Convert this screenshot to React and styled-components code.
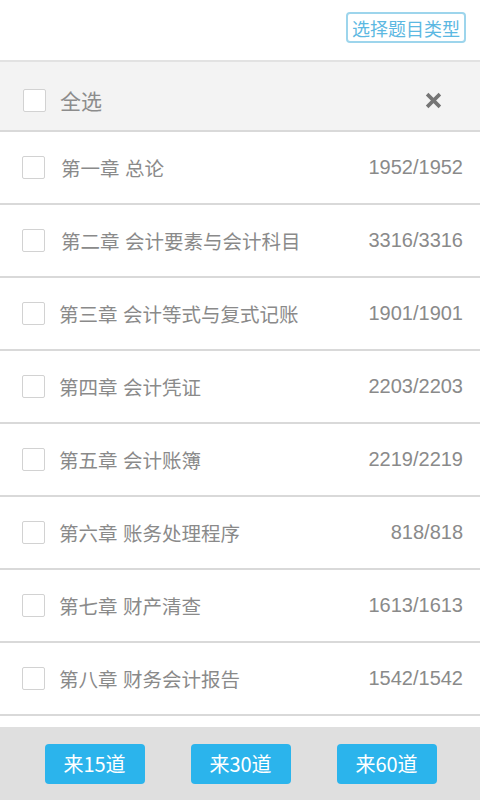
import React from "react";
import styled, { createGlobalStyle } from "styled-components";

const Global = createGlobalStyle`
  html, body { margin: 0; padding: 0; background: #fff; }
  body { font-family: "Liberation Sans", "Noto Sans CJK SC", sans-serif; }
  * { box-sizing: border-box; }
`;

const Page = styled.div`
  width: 480px;
  height: 800px;
  display: flex;
  flex-direction: column;
  overflow: hidden;
`;

const Header = styled.div`
  height: 62px;
  flex: none;
  display: flex;
  justify-content: flex-end;
  align-items: flex-start;
  padding: 12px 14px 0 0;
  border-bottom: 2px solid #e2e2e2;
  background: #fff;
`;

const TypeButton = styled.div`
  width: 120px;
  height: 31px;
  border: 2px solid #9dd5ec;
  border-radius: 4px;
  color: #5cb8e2;
  font-family: "Noto Sans CJK SC", sans-serif;
  font-size: 18px;
  display: flex;
  align-items: center;
  justify-content: center;
`;

const SelectAllBar = styled.div`
  height: 70px;
  flex: none;
  background: #f3f3f3;
  border-bottom: 2px solid #d9d9d9;
  display: flex;
  align-items: center;
  padding: 8px 0 0 23px;
`;

const Box = styled.span`
  width: 23px;
  height: 23px;
  flex: none;
  border: 1px solid #d2d2d2;
  border-radius: 2px;
  background: #fff;
`;

const SelectAllText = styled.span`
  margin-left: 14px;
  font-size: 21px;
  color: #8c8c8c;
  flex: 1;
`;

const CloseWrap = styled.span`
  width: 94px;
  display: flex;
  justify-content: center;
`;

const List = styled.div`
  flex: 1;
  overflow: hidden;
  background: #fff;
`;

const Row = styled.div`
  height: 73px;
  display: flex;
  align-items: center;
  padding: 0 17px 0 22px;
  border-bottom: 2px solid #d9d9d9;
`;

const Label = styled.span`
  flex: 1;
  margin-left: ${(p) => p.$indent}px;
  font-size: 19.5px;
  color: #8a8a8a;
  white-space: nowrap;
`;

const Count = styled.span`
  font-size: 20px;
  color: #8a8a8a;
`;

const Footer = styled.div`
  height: 73px;
  flex: none;
  background: #dfdfdf;
  display: flex;
  justify-content: center;
  align-items: center;
  gap: 46px;
  padding-left: 1px;
`;

const GoButton = styled.div`
  width: 100px;
  height: 40px;
  border-radius: 4px;
  background: #2bb4ec;
  color: #fff;
  font-family: "Noto Sans CJK SC", sans-serif;
  font-size: 20px;
  display: flex;
  align-items: center;
  justify-content: center;
  white-space: nowrap;
`;

const chapters = [
  ["第一章 总论", "1952/1952", 16],
  ["第二章 会计要素与会计科目", "3316/3316", 16],
  ["第三章 会计等式与复式记账", "1901/1901", 14],
  ["第四章 会计凭证", "2203/2203", 14],
  ["第五章 会计账簿", "2219/2219", 14],
  ["第六章 账务处理程序", "818/818", 14],
  ["第七章 财产清查", "1613/1613", 14],
  ["第八章 财务会计报告", "1542/1542", 14],
];

export default function App() {
  return (
    <>
      <Global />
      <Page>
        <Header>
          <TypeButton>选择题目类型</TypeButton>
        </Header>
        <SelectAllBar>
          <Box />
          <SelectAllText>全选</SelectAllText>
          <CloseWrap>
            <svg width="17" height="17" viewBox="0 0 16 16">
              <path d="M2 2 L14 14 M14 2 L2 14" stroke="#757575" strokeWidth="3.4" strokeLinecap="butt" />
            </svg>
          </CloseWrap>
        </SelectAllBar>
        <List>
          {chapters.map(([name, count, indent]) => (
            <Row key={name}>
              <Box />
              <Label $indent={indent}>{name}</Label>
              <Count>{count}</Count>
            </Row>
          ))}
        </List>
        <Footer>
          <GoButton>来15道</GoButton>
          <GoButton>来30道</GoButton>
          <GoButton>来60道</GoButton>
        </Footer>
      </Page>
    </>
  );
}
